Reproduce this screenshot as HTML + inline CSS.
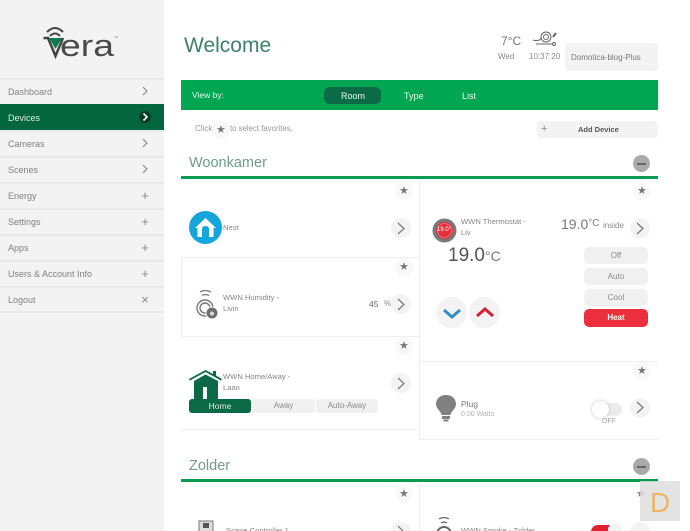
<!DOCTYPE html>
<html><head><meta charset="utf-8"><style>
html,body{margin:0;padding:0;background:#fff;width:690px;height:531px;overflow:hidden}
body{position:relative;font-family:"Liberation Sans",sans-serif;color:#666}
.a,.a *{box-sizing:border-box}
.t{position:absolute;white-space:nowrap;line-height:1}
.b{position:absolute}
.row{position:absolute;left:0;width:164px;height:26px;border-top:2px solid #e9e9e9;background:#f3f3f3;font-size:9px;line-height:24.5px;padding-left:8px;color:#808080}
.row span{position:absolute;left:137px;top:0;width:16px;text-align:center;color:#888}
.circ{position:absolute;width:20px;height:20px;border-radius:50%;background:#f3f3f3}
.star{position:absolute;width:18px;height:18px;border-radius:50%;background:#f8f8f8}
.st{position:absolute;line-height:1;font-size:11px;color:#777}
.pill{position:absolute;border-radius:5px;background:#f0f0f0;font-size:8px;color:#8a8a8a;text-align:center}
.n{position:absolute;white-space:nowrap;line-height:1;font-size:7.6px;color:#858585}
</style></head><body class="a">
<div class="b" style="left:0;top:0;width:164px;height:531px;background:#f3f3f3"></div>
<svg class="b" style="left:40px;top:24px" width="82" height="36" viewBox="0 0 82 36">
<path d="M7 8Q15 0 23 8M10 12Q15 7 20 12" fill="none" stroke="#444" stroke-width="2"/>
<path d="M3.500 14H8L15.500 32L23 14" fill="none" stroke="#444" stroke-width="2.500"/>
<path d="M9 14H22L15.500 25Z" fill="#0a7a50"/>
<text x="20" y="32" font-family="Liberation Sans" font-size="31" fill="#4a4a4a" textLength="54" lengthAdjust="spacingAndGlyphs">era</text>
<text x="74" y="15" font-family="Liberation Sans" font-size="4" fill="#666">™</text>
</svg>
<div class="row" style="top:78px">Dashboard<span><svg width="8" height="10" viewBox="0 0 8 10" style="vertical-align:-1px"><path d="M2 1L6 5L2 9" fill="none" stroke="#888" stroke-width="1.100"/></svg></span></div>
<div class="row" style="top:104px;background:#04663f;border-top-color:#04663f;color:#dcebe5">Devices<span><svg width="14" height="14" viewBox="0 0 14 14" style="vertical-align:-3px"><circle cx="7" cy="7" r="6" fill="#033d27"/><path d="M5.500 3.500L9 7L5.500 10.500" fill="none" stroke="#fff" stroke-width="1.600"/></svg></span></div>
<div class="row" style="top:130px">Cameras<span><svg width="8" height="10" viewBox="0 0 8 10" style="vertical-align:-1px"><path d="M2 1L6 5L2 9" fill="none" stroke="#888" stroke-width="1.100"/></svg></span></div>
<div class="row" style="top:156px">Scenes<span><svg width="8" height="10" viewBox="0 0 8 10" style="vertical-align:-1px"><path d="M2 1L6 5L2 9" fill="none" stroke="#888" stroke-width="1.100"/></svg></span></div>
<div class="row" style="top:182px">Energy<span style="font-size:13px">+</span></div>
<div class="row" style="top:208px">Settings<span style="font-size:13px">+</span></div>
<div class="row" style="top:234px">Apps<span style="font-size:13px">+</span></div>
<div class="row" style="top:260px">Users &amp; Account Info<span style="font-size:13px">+</span></div>
<div class="row" style="top:286px;height:27px;border-bottom:2px solid #e9e9e9">Logout<span style="font-size:13px">×</span></div>

<div class="t" style="left:184px;top:35px;font-size:21px;color:#3f8068">Welcome</div>
<div class="t" style="left:501px;top:35px;font-size:12px;color:#777">7°C</div>
<div class="t" style="left:498px;top:53px;font-size:8px;color:#8a8a8a">Wed</div>
<div class="t" style="left:529px;top:53px;font-size:8px;color:#8a8a8a">10:37:20</div>
<svg class="b" style="left:531px;top:29px" width="30" height="20" viewBox="0 0 30 20"><path d="M2 11Q8 13 10 9M5 15H22" fill="none" stroke="#666"/><circle cx="15" cy="8" r="5" fill="none" stroke="#666"/><circle cx="15" cy="8" r="2.500" fill="none" stroke="#666"/><circle cx="23" cy="15" r="1.500" fill="none" stroke="#666"/><path d="M22 8L25 4" stroke="#666" stroke-width="2"/></svg>
<div class="b" style="left:565px;top:43px;width:93px;height:28px;background:#f3f3f3;border-radius:3px"></div>
<div class="t" style="left:571px;top:54px;font-size:8px;color:#777">Domotica-blog-Plus</div>

<div class="b" style="left:181px;top:80px;width:477px;height:30px;background:#00a651"></div>
<div class="t" style="left:192px;top:91px;font-size:8.500px;color:#e6f6ec">View by:</div>
<div class="b" style="left:324px;top:87px;width:57px;height:17px;background:#0b6b47;border-radius:6px"></div>
<div class="t" style="left:341px;top:92px;font-size:9px;color:#e6f6ec">Room</div>
<div class="t" style="left:404px;top:92px;font-size:9px;color:#e6f6ec">Type</div>
<div class="t" style="left:462px;top:92px;font-size:9px;color:#e6f6ec">List</div>

<div class="t" style="left:195px;top:125px;font-size:8px;color:#999">Click</div>
<div class="star" style="left:212px;top:121px"></div>
<div class="st" style="left:216px;top:125px">★</div>
<div class="t" style="left:230px;top:125px;font-size:7.800px;color:#999">to select favorites.</div>
<div class="b" style="left:537px;top:121px;width:121px;height:17px;background:#f3f3f3;border-radius:4px"></div>
<div class="t" style="left:541px;top:124px;font-size:11px;color:#888">+</div>
<div class="t" style="left:578px;top:126px;font-size:7.500px;font-weight:bold;color:#555">Add Device</div>

<div class="t" style="left:189px;top:156px;font-size:14.500px;color:#6f9c88">Woonkamer</div>
<div class="circ" style="left:633px;top:155px;width:17px;height:17px;background:#aaa"></div>
<div class="b" style="left:637px;top:163px;width:9px;height:1.500px;background:#666"></div>
<div class="b" style="left:181px;top:176px;width:477px;height:3px;background:#0a9a50"></div>

<div class="b" style="left:419px;top:179px;width:1px;height:261px;background:#eee"></div>
<div class="b" style="left:181px;top:257px;width:238px;height:80px;border:1px solid #eee;border-right:0"></div>
<div class="b" style="left:181px;top:429px;width:238px;height:1px;background:#eee"></div>
<div class="b" style="left:420px;top:361px;width:238px;height:1px;background:#eee"></div>
<div class="b" style="left:420px;top:439px;width:238px;height:1px;background:#eee"></div>

<div class="star" style="left:395px;top:182px"></div><div class="st" style="left:399px;top:186px">★</div>
<div class="star" style="left:395px;top:258px"></div><div class="st" style="left:399px;top:262px">★</div>
<div class="star" style="left:395px;top:337px"></div><div class="st" style="left:399px;top:341px">★</div>
<div class="star" style="left:633px;top:182px"></div><div class="st" style="left:637px;top:186px">★</div>
<div class="star" style="left:633px;top:362px"></div><div class="st" style="left:637px;top:366px">★</div>

<svg class="b" style="left:189px;top:211px" width="33" height="33" viewBox="0 0 33 33"><circle cx="16.500" cy="16.500" r="16.500" fill="#14a5dc"/><path d="M6 17L16.500 7L27 17H24.500V26H20V18Q20 15 16.500 15Q13 15 13 18V26H8.500V17Z" fill="#fff"/></svg>
<div class="n" style="left:223px;top:224px">Nest</div>
<div class="circ" style="left:391px;top:218px"></div>
<svg class="b" style="left:396px;top:222px" width="10" height="13" viewBox="0 0 10 13"><path d="M2 1L8 6.500L2 12" fill="none" stroke="#777" stroke-width="1.200"/></svg>

<svg class="b" style="left:195px;top:289px" width="24" height="32" viewBox="0 0 24 32"><path d="M5 3Q10 0 16 3M7 6.500Q10 4.500 14 6.500" fill="none" stroke="#777" stroke-width="1.300"/><circle cx="10" cy="19" r="8" fill="none" stroke="#777" stroke-width="1.400"/><circle cx="10" cy="19" r="5" fill="none" stroke="#777" stroke-width="1.400"/><circle cx="17" cy="24" r="6.500" fill="#fff"/><circle cx="17" cy="24" r="5.500" fill="#6e6e6e"/><circle cx="17" cy="24.500" r="2" fill="#ddd"/></svg>
<div class="n" style="left:223px;top:294px">WWN Humidity -</div>
<div class="n" style="left:223px;top:305px">Livin</div>
<div class="t" style="left:369px;top:300px;font-size:8.500px;color:#666">45</div>
<div class="t" style="left:384px;top:300px;font-size:8px;color:#888">%</div>
<div class="circ" style="left:391px;top:294px"></div>
<svg class="b" style="left:396px;top:298px" width="10" height="13" viewBox="0 0 10 13"><path d="M2 1L8 6.500L2 12" fill="none" stroke="#777" stroke-width="1.200"/></svg>

<svg class="b" style="left:189px;top:369px" width="33" height="31" viewBox="0 0 33 31"><path d="M0 10L16.500 1L24 5V2H27V6.500L33 10L32 11.500L16.500 3L1 11.500Z" fill="#0a6a45"/><path d="M5 12L16.500 5.500L29 12V30H18V18H14V30H5Z" fill="#0a6a45"/></svg>
<div class="n" style="left:223px;top:373px">WWN Home/Away -</div>
<div class="n" style="left:223px;top:384px">Laan</div>
<div class="circ" style="left:391px;top:373px"></div>
<svg class="b" style="left:396px;top:377px" width="10" height="13" viewBox="0 0 10 13"><path d="M2 1L8 6.500L2 12" fill="none" stroke="#777" stroke-width="1.200"/></svg>
<div class="pill" style="left:189px;top:399px;width:62px;height:14px;line-height:14px;background:#0a6a45;color:#dcebe5;font-size:8.500px;border-radius:3px">Home</div>
<div class="pill" style="left:252px;top:399px;width:63px;height:14px;line-height:14px;border-radius:3px">Away</div>
<div class="pill" style="left:316px;top:399px;width:62px;height:14px;line-height:14px;border-radius:3px">Auto-Away</div>

<svg class="b" style="left:432px;top:218px" width="25" height="25" viewBox="0 0 25 25"><circle cx="12.500" cy="12.500" r="12" fill="#7a7a7a"/><circle cx="12.500" cy="12.500" r="8.500" fill="#e0303c"/><circle cx="12.500" cy="12.500" r="7" fill="none" stroke="#f4a0a6" stroke-width=".6"/></svg>
<div class="t" style="left:437px;top:227px;font-size:6px;color:#fff">19.0°</div>
<div class="n" style="left:461px;top:218px">WWN Thermostat -</div>
<div class="n" style="left:461px;top:229px">Liv</div>
<div class="t" style="left:561px;top:217px;font-size:14px;color:#777">19.0<span style="font-size:10px;vertical-align:3px">°C</span></div>
<div class="t" style="left:603px;top:222px;font-size:8px;color:#888">inside</div>
<div class="circ" style="left:630px;top:218px"></div>
<svg class="b" style="left:635px;top:222px" width="10" height="13" viewBox="0 0 10 13"><path d="M2 1L8 6.500L2 12" fill="none" stroke="#777" stroke-width="1.200"/></svg>
<div class="t" style="left:448px;top:246px;font-size:19px;color:#555">19.0<span style="font-size:14px;color:#777">°C</span></div>
<div class="pill" style="left:584px;top:247px;width:64px;height:17px;line-height:17px">Off</div>
<div class="pill" style="left:584px;top:268px;width:64px;height:17px;line-height:17px">Auto</div>
<div class="pill" style="left:584px;top:289px;width:64px;height:17px;line-height:17px">Cool</div>
<div class="pill" style="left:584px;top:309px;width:64px;height:18px;line-height:18px;background:#ec2f3c;color:#fff;font-weight:bold">Heat</div>
<div class="circ" style="left:436px;top:297px;width:31px;height:31px"></div>
<div class="circ" style="left:469px;top:297px;width:31px;height:31px"></div>
<svg class="b" style="left:441px;top:307px" width="22" height="14" viewBox="0 0 22 14"><path d="M3 3L11 10L19 3" fill="none" stroke="#2f8fc4" stroke-width="3"/></svg>
<svg class="b" style="left:474px;top:305px" width="22" height="14" viewBox="0 0 22 14"><path d="M3 11L11 4L19 11" fill="none" stroke="#d6203a" stroke-width="3"/></svg>

<svg class="b" style="left:434px;top:394px" width="24" height="28" viewBox="0 0 24 28"><path d="M12 1C5 1 2 6 2 10C2 15 7 17 7.500 21H16.500C17 17 22 15 22 10C22 6 19 1 12 1Z" fill="#808080"/><rect x="8" y="22" width="8" height="3" fill="#808080"/><rect x="9.500" y="25.500" width="5" height="2" fill="#808080"/></svg>
<div class="t" style="left:461px;top:400px;font-size:8.500px;color:#777">Plug</div>
<div class="t" style="left:461px;top:411px;font-size:7px;color:#b0b0b0">0.00 Watts</div>
<div class="b" style="left:592px;top:403px;width:30px;height:13px;border-radius:7px;background:#ececec"></div>
<div class="b" style="left:592px;top:401px;width:17px;height:17px;border-radius:50%;background:#fff;box-shadow:0 0 3px #bbb"></div>
<div class="t" style="left:602px;top:418px;font-size:7px;color:#a5a5a5">OFF</div>
<div class="circ" style="left:630px;top:398px"></div>
<svg class="b" style="left:635px;top:401px" width="10" height="13" viewBox="0 0 10 13"><path d="M2 1L8 6.500L2 12" fill="none" stroke="#777" stroke-width="1.200"/></svg>

<div class="t" style="left:189px;top:459px;font-size:14.500px;color:#6f9c88">Zolder</div>
<div class="circ" style="left:633px;top:458px;width:17px;height:17px;background:#aaa"></div>
<div class="b" style="left:637px;top:466px;width:9px;height:1.500px;background:#666"></div>
<div class="b" style="left:181px;top:479px;width:477px;height:3px;background:#0a9a50"></div>
<div class="b" style="left:419px;top:482px;width:1px;height:49px;background:#eee"></div>
<div class="star" style="left:395px;top:485px"></div><div class="st" style="left:399px;top:489px">★</div>
<div class="st" style="left:636px;top:489px">★</div>

<svg class="b" style="left:198px;top:520px" width="16" height="11" viewBox="0 0 16 11"><rect x="1" y="1" width="14" height="12" fill="#ddd" stroke="#777"/><rect x="5" y="3" width="6" height="5" fill="#555"/></svg>
<div class="n" style="left:226px;top:527px">Scene Controller 1</div>
<div class="circ" style="left:391px;top:522px"></div>
<svg class="b" style="left:396px;top:526px" width="10" height="5" viewBox="0 0 10 5"><path d="M2 0L7 5" fill="none" stroke="#777" stroke-width="1.200"/></svg>
<svg class="b" style="left:433px;top:516px" width="24" height="15" viewBox="0 0 24 15"><path d="M6 3Q11 0 16 3M8 7Q11 5 14 7" fill="none" stroke="#666" stroke-width="1.300"/><circle cx="11" cy="18" r="7" fill="none" stroke="#666" stroke-width="2"/></svg>
<div class="n" style="left:461px;top:527px">WWN Smoke - Zolder</div>
<div class="b" style="left:591px;top:525px;width:30px;height:14px;border-radius:7px;background:#e0202e"></div>
<div class="b" style="left:608px;top:523px;width:14px;height:14px;border-radius:50%;background:#f4f4f4"></div>
<div class="circ" style="left:630px;top:522px"></div>

<div class="b" style="left:640px;top:481px;width:40px;height:40px;background:rgba(222,222,222,.85)"></div>
<div class="t" style="left:650px;top:489px;font-size:28px;color:#f0b468">D</div>
</body></html>
